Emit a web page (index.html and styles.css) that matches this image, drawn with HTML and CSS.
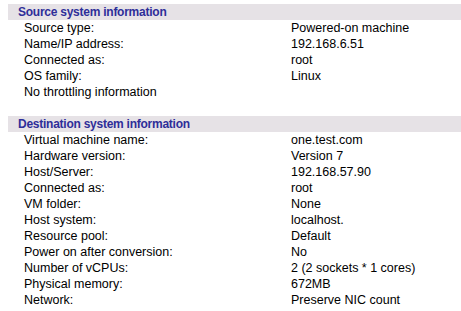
FILE: index.html
```html
<!DOCTYPE html>
<html lang="en">
<head>
    <meta charset="UTF-8">
    <title>Summary</title>
    <link rel="stylesheet" href="styles.css">
</head>
<body>
    <div class="section">
        <div class="section-title">Source system information</div>
        <div class="rows">
            <div class="label">Source type:</div><div class="value">Powered-on machine</div>
            <div class="label">Name/IP address:</div><div class="value">192.168.6.51</div>
            <div class="label">Connected as:</div><div class="value">root</div>
            <div class="label">OS family:</div><div class="value">Linux</div>
            <div class="label">No throttling information</div><div class="value"></div>
        </div>
    </div>

    <div class="section">
        <div class="section-title">Destination system information</div>
        <div class="rows">
            <div class="label">Virtual machine name:</div><div class="value">one.test.com</div>
            <div class="label">Hardware version:</div><div class="value">Version 7</div>
            <div class="label">Host/Server:</div><div class="value">192.168.57.90</div>
            <div class="label">Connected as:</div><div class="value">root</div>
            <div class="label">VM folder:</div><div class="value">None</div>
            <div class="label">Host system:</div><div class="value">localhost.</div>
            <div class="label">Resource pool:</div><div class="value">Default</div>
            <div class="label">Power on after conversion:</div><div class="value">No</div>
            <div class="label">Number of vCPUs:</div><div class="value">2 (2 sockets * 1 cores)</div>
            <div class="label">Physical memory:</div><div class="value">672MB</div>
            <div class="label">Network:</div><div class="value">Preserve NIC count</div>
        </div>
    </div>
</body>
</html>
```

FILE: styles.css
```css
body {
    margin: 4px 0 0 8px;
    background: #fff;
    font-family: "Liberation Sans", Arial, sans-serif;
    font-size: 12.5px;
    color: #000;
}
.section {
    margin-bottom: 16px;
}
.section-title {
    background-color: #e6e2e6;
    color: #2e2e99;
    font-size: 12px;
    font-weight: bold;
    letter-spacing: -0.25px;
    height: 16px;
    line-height: 16px;
    padding-left: 10px;
}
.rows {
    display: grid;
    grid-template-columns: 267px 1fr;
    grid-auto-rows: 16px;
    line-height: 16px;
    padding-left: 16px;
}
.label, .value {
    white-space: nowrap;
}
```
